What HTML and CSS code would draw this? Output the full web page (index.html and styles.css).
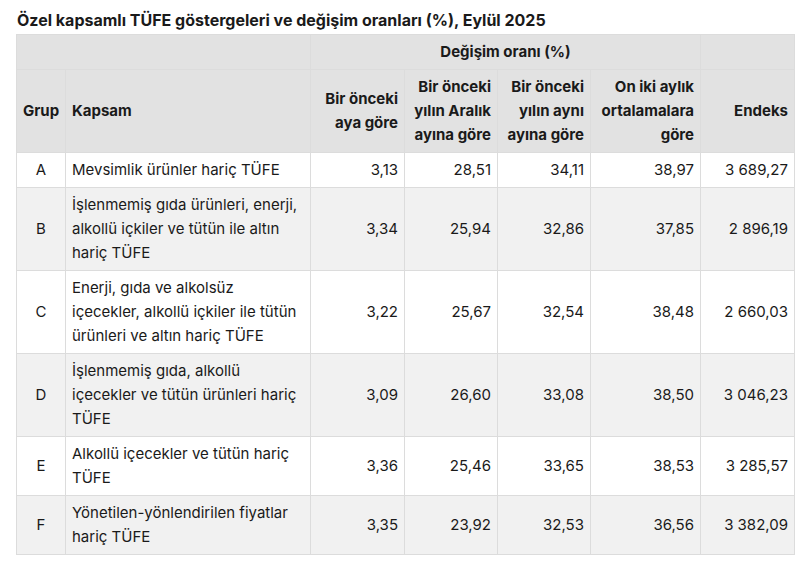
FILE: index.html
```html
<!DOCTYPE html>
<html lang="tr">
<head>
<meta charset="utf-8">
<title>Özel kapsamlı TÜFE göstergeleri</title>
<link rel="stylesheet" href="styles.css">
</head>
<body>
<div class="page">
  <h1 class="title">Özel kapsamlı TÜFE göstergeleri ve değişim oranları (%), Eylül 2025</h1>
  <table class="cpi">
    <colgroup>
      <col class="c-grup">
      <col class="c-kapsam">
      <col class="c-n1">
      <col class="c-n2">
      <col class="c-n3">
      <col class="c-n4">
      <col class="c-endeks">
    </colgroup>
    <thead>
      <tr>
        <th colspan="2"></th>
        <th colspan="4" class="center">Değişim oranı (%)</th>
        <th></th>
      </tr>
      <tr>
        <th class="center">Grup</th>
        <th class="left">Kapsam</th>
        <th class="num">Bir önceki<br>aya göre</th>
        <th class="num">Bir önceki<br>yılın Aralık<br>ayına göre</th>
        <th class="num">Bir önceki<br>yılın aynı<br>ayına göre</th>
        <th class="num">On iki aylık<br>ortalamalara<br>göre</th>
        <th class="num">Endeks</th>
      </tr>
    </thead>
    <tbody>
      <tr>
        <td class="center">A</td>
        <td>Mevsimlik ürünler hariç TÜFE</td>
        <td class="num">3,13</td>
        <td class="num">28,51</td>
        <td class="num">34,11</td>
        <td class="num">38,97</td>
        <td class="num">3 689,27</td>
      </tr>
      <tr>
        <td class="center">B</td>
        <td>İşlenmemiş gıda ürünleri, enerji,<br>alkollü içkiler ve tütün ile altın<br>hariç TÜFE</td>
        <td class="num">3,34</td>
        <td class="num">25,94</td>
        <td class="num">32,86</td>
        <td class="num">37,85</td>
        <td class="num">2 896,19</td>
      </tr>
      <tr>
        <td class="center">C</td>
        <td>Enerji, gıda ve alkolsüz<br>içecekler, alkollü içkiler ile tütün<br>ürünleri ve altın hariç TÜFE</td>
        <td class="num">3,22</td>
        <td class="num">25,67</td>
        <td class="num">32,54</td>
        <td class="num">38,48</td>
        <td class="num">2 660,03</td>
      </tr>
      <tr>
        <td class="center">D</td>
        <td>İşlenmemiş gıda, alkollü<br>içecekler ve tütün ürünleri hariç<br>TÜFE</td>
        <td class="num">3,09</td>
        <td class="num">26,60</td>
        <td class="num">33,08</td>
        <td class="num">38,50</td>
        <td class="num">3 046,23</td>
      </tr>
      <tr>
        <td class="center">E</td>
        <td>Alkollü içecekler ve tütün hariç<br>TÜFE</td>
        <td class="num">3,36</td>
        <td class="num">25,46</td>
        <td class="num">33,65</td>
        <td class="num">38,53</td>
        <td class="num">3 285,57</td>
      </tr>
      <tr>
        <td class="center">F</td>
        <td>Yönetilen-yönlendirilen fiyatlar<br>hariç TÜFE</td>
        <td class="num">3,35</td>
        <td class="num">23,92</td>
        <td class="num">32,53</td>
        <td class="num">36,56</td>
        <td class="num">3 382,09</td>
      </tr>
    </tbody>
  </table>
</div>
</body>
</html>
```
FILE: styles.css
```css
* { box-sizing: border-box; }
html, body {
  margin: 0;
  padding: 0;
  background: #ffffff;
}
body {
  font-family: Inter, "Noto Sans", "Liberation Sans", sans-serif;
  color: #1a1a1a;
}
.page {
  padding: 10px 16px 16px 16px;
}
.title {
  margin: 0 0 4px 1px;
  font-size: 16px;
  line-height: 20px;
  font-weight: 700;
  color: #1a1a1a;
}
.cpi {
  border-collapse: collapse;
  table-layout: fixed;
  width: 778px;
  font-size: 15px;
  line-height: 24px;
}
.c-grup { width: 49px; }
.c-kapsam { width: 245px; }
.c-n1 { width: 94px; }
.c-n2 { width: 93px; }
.c-n3 { width: 93px; }
.c-n4 { width: 110px; }
.c-endeks { width: 94px; }
.cpi th,
.cpi td {
  border: 1px solid #dcdcdc;
  padding: 5px 6px;
  vertical-align: middle;
  white-space: nowrap;
}
.cpi th {
  background: #e2e2e2;
  font-weight: 700;
  color: #1a1a1a;
}
.cpi tbody tr:nth-child(even) td {
  background: #f1f1f1;
}
.left { text-align: left; }
.center { text-align: center; }
.num { text-align: right; }
```
